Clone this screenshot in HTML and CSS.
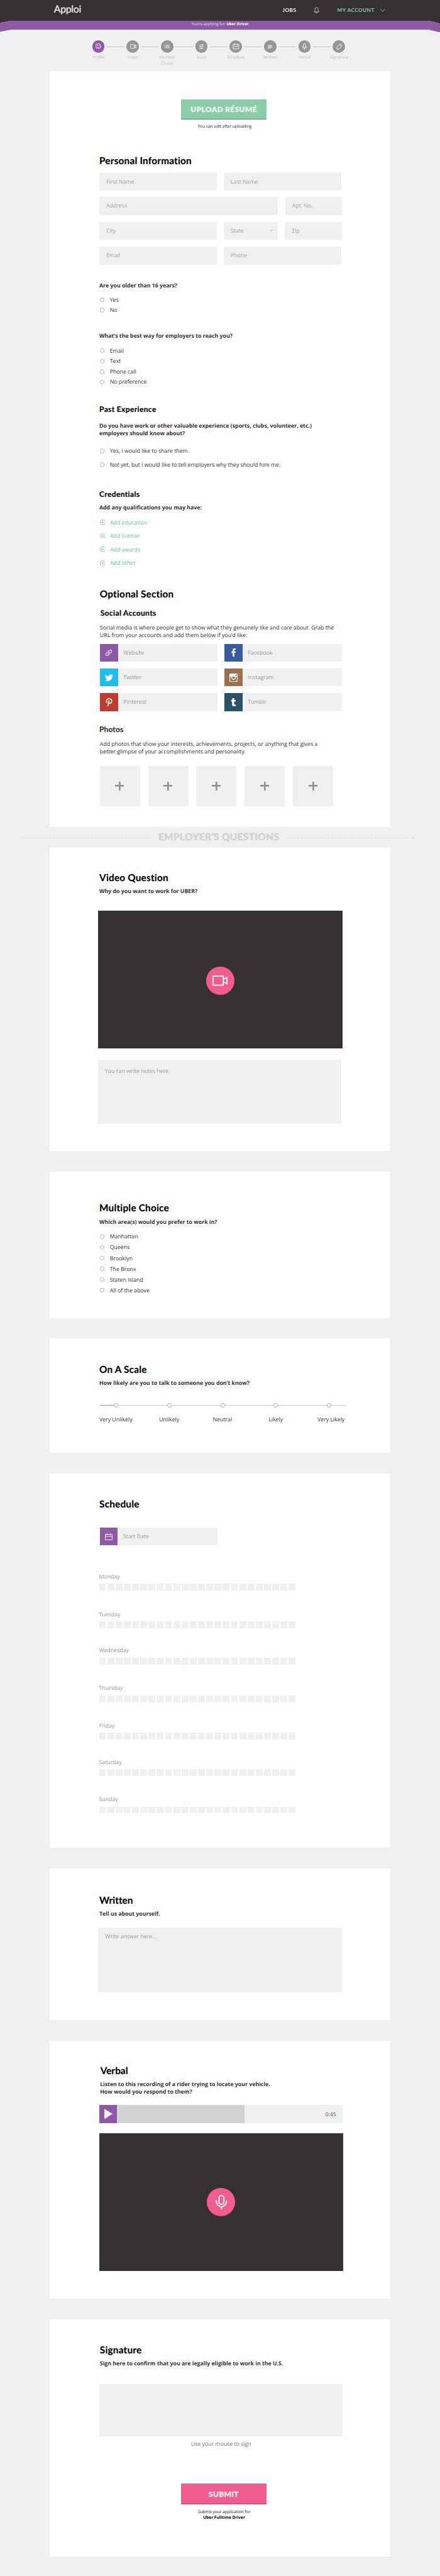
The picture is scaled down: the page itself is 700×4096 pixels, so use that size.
FILE: index.html
```html
<!DOCTYPE html>
<html lang="en">
<head>
<meta charset="utf-8">
<title>Apploi – Uber Driver application</title>
<link rel="stylesheet" href="styles.css">
</head>
<body>
<header class="topbar">
  <a class="logo">Apploi</a>
  <nav class="nav">
    <a class="nav-jobs">JOBS</a>
    <svg class="nav-bell" viewBox="0 0 17 19" fill="none" stroke="#eff1f1" stroke-width="1.4"><path d="M1 14.6h15M2.2 14.6c1.4-2 1.5-3.400 1.600-6C4 4 5.500 1.200 8.500 1.200S13 4 13.200 8.600c.1 2.600.2 4 1.600 6" stroke-linejoin="round"/><path d="M7 17.600h3" stroke-width="1.800"/></svg>
    <a class="nav-account">MY ACCOUNT</a>
    <svg class="nav-chevron" viewBox="0 0 14 9" fill="none" stroke="#86cba5" stroke-width="1.800"><path d="M.8.8 7 7.400 13.200.8"/></svg>
  </nav>
</header>
<div class="ribbon">
  <svg class="ribbon-shape" viewBox="0 0 1280 34" preserveAspectRatio="none"><path fill="#353132" d="M0 0h1280v8l-32-8H32L0 6z"/><path fill="#8f5aa5" d="M0 6 32 0h1216l32 8v26l-32-8H32L0 32z"/></svg>
  <p class="ribbon-text">You’re applying for: <b>Uber Driver</b></p>
</div>

<ol class="steps">
  <li class="step step-on"><span class="dot"><svg viewBox="0 0 20 20" fill="none" stroke="#fff" stroke-width="1.500"><circle cx="10" cy="10" r="7.300"/><path d="M6.300 11.500c.8 3 6.600 3 7.400 0"/><path d="M7.500 6.500v2.400M12.500 6.500v2.400" stroke-width="1.800"/></svg></span><span class="step-name">Profile</span></li>
  <li class="step"><span class="dot"><svg viewBox="0 0 20 20" fill="none" stroke="#fff" stroke-width="1.500"><path d="M3 5.500h11.500v11H3zM14.500 10l4.500-3v8.500l-4.500-3z" stroke-linejoin="round"/></svg></span><span class="step-name">Video</span></li>
  <li class="step"><span class="dot"><svg viewBox="0 0 20 20" fill="none" stroke="#fff" stroke-width="1.500"><path d="M6 7.500h12M6 11h12M6 14.500h12M2.500 7.500H4M2.500 11H4M2.500 14.500H4"/></svg></span><span class="step-name">Multiple<br>Choice</span></li>
  <li class="step"><span class="dot"><svg viewBox="0 0 20 20" fill="none" stroke="#fff" stroke-width="1.500"><path d="M3 6.500h14M3 11.500h14M3 16.500h14M12.500 4v5M7 9v5M10.500 14v5"/></svg></span><span class="step-name">Scale</span></li>
  <li class="step"><span class="dot"><svg viewBox="0 0 20 20" fill="none" stroke="#fff" stroke-width="1.500"><path d="M1.800 4.500h16.400v13.500H1.800zM1.800 10.500h16.400M6 2v4.500M14 2v4.500"/></svg></span><span class="step-name">Schedule</span></li>
  <li class="step"><span class="dot"><svg viewBox="0 0 20 20" fill="none" stroke="#fff" stroke-width="1.500"><path d="M4 7.800h12.500M4 10.500h12.500M4 13.200h12.500M4 16h8"/></svg></span><span class="step-name">Written</span></li>
  <li class="step"><span class="dot"><svg viewBox="0 0 20 20" fill="none" stroke="#fff" stroke-width="1.500"><rect x="6.500" y="2.500" width="7" height="11" rx="3.500"/><path d="M3.500 9.500c0 9 13 9 13 0M10 16.200v3.500"/></svg></span><span class="step-name">Verbal</span></li>
  <li class="step"><span class="dot"><svg viewBox="0 0 20 20" fill="none" stroke="#fff" stroke-width="1.500"><path d="M3.500 18.500v-6L13.200 2l6 5.300L9.500 18.500zM10.600 4.800l6 5.300" stroke-linejoin="round"/></svg></span><span class="step-name">Signature</span></li>
</ol>

<section class="card card-profile">
  <button class="btn btn-upload">UPLOAD RÉSUMÉ</button>
  <p class="upload-note">You can edit after uploading</p>

  <h2 class="title title-personal">Personal Information</h2>
  <div class="form">
    <div class="form-row row-half"><label class="field">First Name</label><label class="field">Last Name</label></div>
    <div class="form-row row-address"><label class="field">Address</label><label class="field">Apt. No.</label></div>
    <div class="form-row row-city"><label class="field">City</label><label class="field field-select">State <svg viewBox="0 0 9 6" fill="none" stroke="#939597" stroke-width="1.200"><path d="M.5.5l4 4.500 4-4.500"/></svg></label><label class="field">Zip</label></div>
    <div class="form-row row-half"><label class="field">Email</label><label class="field">Phone</label></div>
  </div>

  <h4 class="ask ask-age">Are you older than 16 years?</h4>
  <ul class="options options-age"><li>Yes</li><li>No</li></ul>
  <h4 class="ask ask-reach">What’s the best way for employers to reach you?</h4>
  <ul class="options options-reach"><li>Email</li><li>Text</li><li>Phone call</li><li>No preference</li></ul>

  <h3 class="subtitle subtitle-past">Past Experience</h3>
  <h4 class="ask ask-past">Do you have work or other valuable experience (sports, clubs, volunteer, etc.)<br>employers should know about?</h4>
  <ul class="options options-past"><li>Yes, I would like to share them.</li><li>Not yet, but I would like to tell employers why they should hire me.</li></ul>

  <h3 class="subtitle subtitle-cred">Credentials</h3>
  <h4 class="ask ask-cred">Add any qualifications you may have:</h4>
  <ul class="adds">
    <li><svg viewBox="0 0 16 16" fill="none" stroke="#5bb68a" stroke-width="1.200"><circle cx="8" cy="8" r="7.300"/><path d="M8 4.500v7M4.500 8h7"/></svg>Add education</li>
    <li><svg viewBox="0 0 16 16" fill="none" stroke="#5bb68a" stroke-width="1.200"><circle cx="8" cy="8" r="7.300"/><path d="M8 4.500v7M4.500 8h7"/></svg>Add license</li>
    <li><svg viewBox="0 0 16 16" fill="none" stroke="#5bb68a" stroke-width="1.200"><circle cx="8" cy="8" r="7.300"/><path d="M8 4.500v7M4.500 8h7"/></svg>Add awards</li>
    <li><svg viewBox="0 0 16 16" fill="none" stroke="#5bb68a" stroke-width="1.200"><circle cx="8" cy="8" r="7.300"/><path d="M8 4.500v7M4.500 8h7"/></svg>Add other</li>
  </ul>

  <h2 class="title title-optional">Optional Section</h2>
  <h3 class="subtitle subtitle-social">Social Accounts</h3>
  <p class="text text-social">Social media is where people get to show what they genuinely like and care about. Grab the<br>URL from your accounts and add them below if you’d like:</p>
  <div class="social">
    <div class="account"><span class="badge badge-web"><svg viewBox="0 0 24 24" fill="none" stroke="#fff" stroke-width="2.200" stroke-linecap="round"><path d="M10.200 13.800a4 4 0 0 0 5.700 0l4-4a4 4 0 0 0-5.700-5.700l-3 2.800"/><path d="M13.800 10.200a4 4 0 0 0-5.700 0l-4 4a4 4 0 0 0 5.700 5.700l3-2.800"/></svg></span><span class="account-name">Website</span></div>
    <div class="account"><span class="badge badge-fb"><svg viewBox="0 0 24 24" fill="#fff"><path d="M9.200 24V13H6V8.800h3.200V5.600C9.200 2 11.400 0 14.600 0H18v4.200h-2c-1.400 0-1.800.7-1.800 1.900v2.700H18L17.500 13h-3.300v11z"/></svg></span><span class="account-name">Facebook</span></div>
    <div class="account"><span class="badge badge-tw"><svg viewBox="0 0 24 24" fill="#fff"><path d="M23.950 4.570a10 10 0 0 1-2.820.77 4.960 4.960 0 0 0 2.160-2.720c-.95.55-2 .95-3.130 1.180a4.920 4.920 0 0 0-8.380 4.480C7.690 8.090 4.070 6.130 1.640 3.160a4.920 4.920 0 0 0 1.520 6.570 4.900 4.900 0 0 1-2.230-.61v.06c0 2.390 1.700 4.380 3.950 4.830a5 5 0 0 1-2.210.08 4.940 4.940 0 0 0 4.600 3.420A9.870 9.870 0 0 1 0 19.540a14 14 0 0 0 7.550 2.210c9.050 0 14-7.500 14-13.980 0-.21 0-.42-.02-.63a9.940 9.940 0 0 0 2.420-2.570z"/></svg></span><span class="account-name">Twitter</span></div>
    <div class="account"><span class="badge badge-ig"><svg viewBox="0 0 24 24"><path fill="#fff" fill-rule="evenodd" d="M2 0h20a2 2 0 0 1 2 2v20a2 2 0 0 1-2 2H2a2 2 0 0 1-2-2V2a2 2 0 0 1 2-2zm16 2.500v4h4v-4zM2.300 9.800V21a.8.8 0 0 0 .8.8h17.800a.8.8 0 0 0 .8-.8V9.800h-3.900a6.200 6.200 0 1 1-11.600 0zM12 8.200a3.900 3.900 0 1 0 0 7.800 3.900 3.900 0 0 0 0-7.800z"/></svg></span><span class="account-name">Instagram</span></div>
    <div class="account"><span class="badge badge-pin"><svg viewBox="0 0 24 24" fill="none" stroke="#fff" stroke-linecap="round"><path stroke-width="3" d="M6.200 13.200C2.500 9.500 4.500 2 12 1.800c6-.1 8.700 4 7.600 8.300-1.100 5-7.200 7-9 3.200"/><path stroke-width="3" d="M12 7.500 8.400 22.500"/></svg></span><span class="account-name">Pinterest</span></div>
    <div class="account"><span class="badge badge-tum"><svg viewBox="0 0 24 24" fill="#fff"><path d="M9 0h4.800v5.600H18v4.500h-4.200v6.500c0 2.400 1.800 3 5 2.200v4c-1.500.9-3.200 1.200-5 1.200-4 0-6.200-2-6.200-5.800v-8.100H5V6.200C7.500 5.300 8.700 3 9 0z"/></svg></span><span class="account-name">Tumblr</span></div>
  </div>

  <h3 class="subtitle subtitle-photos">Photos</h3>
  <p class="text text-photos">Add photos that show your interests, achievements, projects, or anything that gives a<br>better glimpse of your accomplishments and personality.</p>
  <div class="photos">
    <div class="photo"></div><div class="photo"></div><div class="photo"></div><div class="photo"></div><div class="photo"></div>
  </div>
</section>

<div class="divider"><i class="dash dash-left"></i><h2 class="divider-title">EMPLOYER’S QUESTIONS</h2><i class="dash dash-right"></i></div>

<section class="card card-video">
  <h2 class="title">Video Question</h2>
  <h4 class="ask ask-sub">Why do you want to work for UBER?</h4>
  <div class="screen"><span class="record"><svg viewBox="0 0 44 30" fill="none" stroke="#eff1f1" stroke-width="3.600" stroke-linejoin="round"><path d="M1.800 1.800h29.600v26.400H1.800zM32.500 10.800l9.600-5.300v19l-9.600-5.300"/></svg></span></div>
  <div class="notes">You can write notes here.</div>
</section>

<section class="card card-choice">
  <h2 class="title">Multiple Choice</h2>
  <h4 class="ask ask-sub">Which area(s) would you prefer to work in?</h4>
  <ul class="options options-area"><li>Manhattan</li><li>Queens</li><li>Brooklyn</li><li>The Bronx</li><li>Staten Island</li><li>All of the above</li></ul>
</section>

<section class="card card-scale">
  <h2 class="title">On A Scale</h2>
  <h4 class="ask ask-sub">How likely are you to talk to someone you don’t know?</h4>
  <div class="track"><i></i><i></i><i></i><i></i><i></i></div>
  <div class="track-labels"><span>Very Unlikely</span><span>Unlikely</span><span>Neutral</span><span>Likely</span><span>Very Likely</span></div>
</section>

<section class="card card-schedule">
  <h2 class="title">Schedule</h2>
  <div class="account account-date"><span class="badge badge-web"><svg viewBox="0 0 22 20" fill="none" stroke="#fff" stroke-width="1.700"><path d="M1 3.200h20v15.600H1zM1 9.200h20M6 .3v5M16 .3v5"/></svg></span><span class="account-name">Start Date</span></div>
  <div class="days">
    <div class="day"><span>Monday</span><div class="hours"><i></i><i></i><i></i><i></i><i></i><i></i><i></i><i></i><i></i><i></i><i></i><i></i><i></i><i></i><i></i><i></i><i></i><i></i><i></i><i></i><i></i><i></i><i></i><i></i></div></div>
    <div class="day"><span>Tuesday</span><div class="hours"><i></i><i></i><i></i><i></i><i></i><i></i><i></i><i></i><i></i><i></i><i></i><i></i><i></i><i></i><i></i><i></i><i></i><i></i><i></i><i></i><i></i><i></i><i></i><i></i></div></div>
    <div class="day"><span>Wednesday</span><div class="hours"><i></i><i></i><i></i><i></i><i></i><i></i><i></i><i></i><i></i><i></i><i></i><i></i><i></i><i></i><i></i><i></i><i></i><i></i><i></i><i></i><i></i><i></i><i></i><i></i></div></div>
    <div class="day"><span>Thursday</span><div class="hours"><i></i><i></i><i></i><i></i><i></i><i></i><i></i><i></i><i></i><i></i><i></i><i></i><i></i><i></i><i></i><i></i><i></i><i></i><i></i><i></i><i></i><i></i><i></i><i></i></div></div>
    <div class="day"><span>Friday</span><div class="hours"><i></i><i></i><i></i><i></i><i></i><i></i><i></i><i></i><i></i><i></i><i></i><i></i><i></i><i></i><i></i><i></i><i></i><i></i><i></i><i></i><i></i><i></i><i></i><i></i></div></div>
    <div class="day"><span>Saturday</span><div class="hours"><i></i><i></i><i></i><i></i><i></i><i></i><i></i><i></i><i></i><i></i><i></i><i></i><i></i><i></i><i></i><i></i><i></i><i></i><i></i><i></i><i></i><i></i><i></i><i></i></div></div>
    <div class="day"><span>Sunday</span><div class="hours"><i></i><i></i><i></i><i></i><i></i><i></i><i></i><i></i><i></i><i></i><i></i><i></i><i></i><i></i><i></i><i></i><i></i><i></i><i></i><i></i><i></i><i></i><i></i><i></i></div></div>
  </div>
</section>

<section class="card card-written">
  <h2 class="title">Written</h2>
  <h4 class="ask ask-sub">Tell us about yourself.</h4>
  <div class="notes">Write answer here...</div>
</section>

<section class="card card-verbal">
  <h2 class="title">Verbal</h2>
  <h4 class="ask ask-sub">Listen to this recording of a rider trying to locate your vehicle.<br>How would you respond to them?</h4>
  <div class="player"><span class="play"><svg viewBox="0 0 24 30" fill="#eff1f1"><path d="M0 0l24 15L0 30z"/></svg></span><span class="played"></span><span class="time">0:45</span></div>
  <div class="screen"><span class="record"><svg viewBox="0 0 34 43" fill="none" stroke="#eff1f1" stroke-width="3.600"><rect x="9.800" y="1.800" width="14.400" height="26" rx="7.200"/><path d="M1.800 15c0 26 30.400 26 30.400 0M17 34.500V43"/></svg></span></div>
</section>

<section class="card card-signature">
  <h2 class="title">Signature</h2>
  <h4 class="ask ask-sub">Sign here to confirm that you are legally eligible to work in the U.S.</h4>
  <div class="sign-box"></div>
  <p class="sign-hint">Use your mouse to sign</p>
  <button class="btn btn-submit">SUBMIT</button>
  <p class="submit-note">Submit your application for<br><b>Uber Fulltime Driver</b></p>
</section>
</body>
</html>
```
FILE: styles.css
```css
/* 1rem is ten layout units on a 1280-unit wide page */
html { font-size: 5.46875px; }
*, *::before, *::after { box-sizing: border-box; }
body {
  margin: 0;
  width: 128rem;
  height: 4096px;
  overflow: hidden;
  background: #eff1f1;
  color: #353132;
  font-family: "Open Sans", "Noto Sans", sans-serif;
  font-size: 1.6rem;
  line-height: 2.2rem;
  text-rendering: geometricPrecision;
}
h2, h3, h4, p, ul, ol { margin: 0; padding: 0; }
ul, ol { list-style: none; }
svg { display: block; }

/* header */
.topbar {
  display: flex;
  justify-content: space-between;
  height: 6rem;
  padding: 0 16rem 0 15.7rem;
  background: #353132;
  font-family: Lato, sans-serif;
}
.logo { font-size: 2.9rem; line-height: 5.5rem; color: #eff1f1; letter-spacing: -0.06rem; -webkit-text-stroke: 0.04rem #eff1f1; }
.nav { display: flex; align-items: center; font-weight: 700; font-size: 1.5rem; }
.nav-jobs { color: #eff1f1; letter-spacing: 0.09rem; margin-right: 5.1rem; }
.nav-bell { width: 1.7rem; height: 1.9rem; margin-right: 5.1rem; }
.nav-account { color: #86cba5; letter-spacing: 0.09rem; width: 11rem; white-space: nowrap; margin-right: 1.5rem; }
.nav-chevron { width: 1.4rem; height: 0.9rem; }
.ribbon { height: 3.4rem; display: grid; }
.ribbon-shape { grid-area: 1 / 1; width: 128rem; height: 3.4rem; }
.ribbon-text {
  grid-area: 1 / 1;
  z-index: 1;
  text-align: center;
  font-size: 1.11rem;
  line-height: 1.9rem;
  color: #e9def0;
}
.ribbon-text b { color: #fff; }

/* progress steps */
.steps { display: flex; gap: 0; height: 11.2rem; padding: 2.3rem 0 0 23.6rem; }
.step { width: 10rem; flex: none; display: flex; flex-direction: column; align-items: center; position: relative; }
.step + .step::before {
  content: "";
  position: absolute;
  left: -2.5rem;
  top: 1.8rem;
  width: 5rem;
  height: 1px;
  background: #bfc1c2;
}
.dot { width: 3.6rem; height: 3.6rem; border-radius: 50%; background: #939597; display: flex; align-items: center; justify-content: center; }
.dot svg { width: 2rem; height: 2rem; }
.step-on .dot { background: #8f5aa5; }
.step-name { margin-top: 0.5rem; font-size: 1.18rem; line-height: 1.7rem; color: #bdbfc0; text-align: center; }

/* cards */
.card { display: flex; flex-direction: column; align-items: flex-start; width: 99.2rem; margin: 0 14.4rem 6rem; padding-left: 14.5rem; background: #fff; }
.card-profile { height: 219.9rem; padding-top: 8.2rem; margin-bottom: 0; }
.card-video { height: 88.2rem; padding-top: 7.11rem; }
.card-choice { height: 42.5rem; padding-top: 9.01rem; margin-bottom: 5.95rem; }
.card-scale { height: 33.25rem; padding-top: 7.46rem; }
.card-schedule { height: 108.9rem; padding-top: 7.41rem; margin-bottom: 6.05rem; }
.card-written { height: 44.05rem; padding-top: 7.61rem; }
.card-verbal { height: 74.9rem; padding-top: 7.11rem; }
.card-signature { height: 68.96rem; padding-top: 7.31rem; margin-bottom: 0; }

.title { font: 700 2.8rem/3.4rem Lato, sans-serif; letter-spacing: 0.04rem; color: #000; -webkit-text-stroke: 0.03rem #000; }
.card-written .title, .card-verbal .title { letter-spacing: 0.01rem; }
.subtitle { font: 700 2.2rem/2.8rem Lato, sans-serif; letter-spacing: 0.065rem; color: #000; -webkit-text-stroke: 0.03rem; }
.ask { font-size: 1.6rem; line-height: 2.2rem; font-weight: 700; white-space: nowrap; }
.ask-sub { margin-top: 1.07rem; }
.text { white-space: nowrap; }

/* buttons */
.btn {
  border: 0;
  padding: 0;
  width: 24.7rem;
  height: 6rem;
  font: 900 2.2rem/5.4rem Lato, sans-serif;
  letter-spacing: 0.06rem;
  color: #eff1f1;
  text-align: center;
  -webkit-text-stroke: 0.05rem #eff1f1;
  margin-left: 23.85rem;
}
.btn-upload { background: #8bcda7; border-bottom: 0.2rem solid #438f74; line-height: 6rem; }
.btn-submit { background: #f15d90; border-bottom: 0.2rem solid #c2336b; margin-top: 10.52rem; }
.upload-note { margin: 1.23rem 0 0 24.1rem; width: 24.7rem; text-align: center; font-size: 1.2rem; line-height: 1.6rem; color: #111; }

/* personal form */
.title-personal { margin-top: 7.58rem; }
.form { margin-top: 1.59rem; }
.form-row { display: grid; height: 5.2rem; margin-bottom: 2rem; gap: 2rem; }
.form-row:first-child { margin-bottom: 1.9rem; }
.form-row:last-child { margin-bottom: 0; }
.row-half { grid-template-columns: 34.2rem 34.2rem; }
.row-address { grid-template-columns: 52rem 16.5rem; gap: 2.1rem; }
.row-city { grid-template-columns: 34.2rem 15.8rem 16.5rem; }
.field { background: #eff1f1; padding-left: 2rem; line-height: 5.2rem; color: #a0a2a3; }
.field-select { display: flex; align-items: center; justify-content: space-between; padding-right: 1.6rem; }
.field-select svg { width: 0.9rem; height: 0.6rem; }

/* questions */
.ask-age { margin-top: 4.98rem; }
.ask-reach { margin-top: 4.9rem; }
.ask-past { margin-top: 2.25rem; }
.ask-cred { margin-top: 1.53rem; }
.options li { display: flex; align-items: center; height: 3rem; white-space: nowrap; }
.options li::before { content: ""; width: 1.35rem; height: 1.35rem; border: 1px solid #b0b2b3; border-radius: 50%; margin: 0 1.55rem 0 0.15rem; }
.options-age { margin-top: 1.6rem; }
.options-reach { margin-top: 1.7rem; }
.options-reach li { height: 3.03rem; }
.options-past { margin-top: 2.06rem; }
.options-past li { height: 4rem; }
.options-area { margin-top: 1.64rem; }
.options-area li { height: 3.12rem; }
.subtitle-past { margin-top: 5.03rem; }
.subtitle-cred { margin-top: 5.06rem; }
.adds { margin-top: 1.18rem; }
.adds li { display: flex; align-items: center; height: 3.94rem; color: #6dbf96; }
.adds svg { width: 1.6rem; height: 1.6rem; margin: 0 1.4rem 0 0.1rem; }

/* optional section */
.title-optional { margin: 5.44rem 0 0 0.15rem; }
.subtitle-social { margin: 2.38rem 0 0 0.3rem; }
.text-social { margin: 1.69rem 0 0 0.15rem; }
.social { display: grid; grid-template-columns: 34.2rem 34.2rem; gap: 2rem; margin: 1.39rem 0 0 0.2rem; }
.account { display: flex; align-items: center; height: 5.2rem; background: #eff1f1; color: #97999a; }
.badge { width: 5.2rem; height: 100%; display: flex; align-items: center; justify-content: center; }
.badge svg { width: 2.4rem; height: 2.4rem; }
.badge-web { background: #8f5aa5; }
.badge-web svg { width: 2.2rem; height: 2.2rem; }
.badge-fb { background: #3959a0; }
.badge-tw { background: #1dbff2; }
.badge-ig { background: #9d6f4f; }
.badge-pin { background: #c33b2f; }
.badge-tum { background: #2b5068; }
.account-name { margin-left: 1.6rem; }
.subtitle-photos { margin-top: 3.88rem; letter-spacing: 0.02rem; color: #353132; }
.text-photos { margin: 1.78rem 0 0 0.15rem; }
.photos { display: flex; gap: 2.37rem; margin: 3.05rem 0 0 0.1rem; }
.photo { width: 11.7rem; height: 11.7rem; background: linear-gradient(#939597, #939597) center / 2.6rem 0.5rem no-repeat, linear-gradient(#939597, #939597) center / 0.5rem 2.6rem no-repeat, #eff1f1; }

/* divider */
.divider { display: flex; align-items: center; height: 6rem; }
.divider-title { font: 900 2.8rem/2.8rem Lato, sans-serif; letter-spacing: 0.075rem; color: #d1d3d4; -webkit-text-stroke: 0.09rem #d1d3d4; width: 39.3rem; text-align: center; white-space: nowrap; }
.dash { width: 37.5rem; margin-top: 0.2rem; height: 1px; }
.dash-left { margin-left: 6.5rem; background: repeating-linear-gradient(90deg, #dcdede 0 0.5rem, transparent 0.5rem 0.8rem); }
.dash-right { background: repeating-linear-gradient(90deg, #d4d6d7 0 0.5rem, transparent 0.5rem 0.8rem); }

/* video, written and verbal answers */
.screen { display: flex; align-items: center; justify-content: center; width: 71.1rem; height: 40rem; background: #353132; }
.record { width: 8.2rem; height: 8.3rem; border-radius: 50%; background: #f15d90; box-shadow: inset 0 -0.2rem 0 #dd3f79; display: flex; align-items: center; justify-content: center; }
.notes { width: 70.8rem; background: #eff1f1; color: #97999a; padding: 2.2rem 2rem; }
.card-video .screen { margin: 4.5rem 0 0 -0.4rem; }
.card-video .record svg { width: 4.4rem; height: 3rem; }
.card-video .record { margin-top: 0.8rem; }
.card-video .notes { margin: 3.25rem 0 0 -0.4rem; height: 18.8rem; }
.card-written .notes { margin: 2.92rem 0 0 -0.3rem; height: 18.8rem; padding-top: 1.4rem; }
.card-verbal .title { margin-left: 0.3rem; }
.card-verbal .ask { margin-left: 0.2rem; }
.card-verbal .screen { margin: 3rem 0 0 -0.1rem; }
.card-verbal .record svg { width: 3.4rem; height: 4.3rem; }
.player { display: flex; align-items: center; width: 70.8rem; height: 5.2rem; margin-top: 2.72rem; background: #eff1f1; }
.play { display: flex; align-items: center; width: 5.2rem; height: 100%; padding-left: 1.5rem; background: #8f5aa5; }
.play svg { width: 2.4rem; height: 3rem; }
.played { width: 37.1rem; height: 100%; background: #d1d2d4; }
.time { margin-left: auto; margin-right: 1.9rem; color: #58595b; }

/* scale */
.track {
  display: flex;
  align-items: center;
  gap: 14.2rem;
  width: 71.5rem;
  height: 1.4rem;
  margin: 4.68rem 0 0 0.1rem;
  padding-left: 4.1rem;
  background: linear-gradient(90deg, #939597 4.1rem, #c9cbcc 4.1rem) center / 100% 1px no-repeat;
}
.track i { flex: none; width: 1.3rem; height: 1.3rem; border: 1px solid #a0a2a3; border-radius: 50%; background: #fff; }
.track-labels { display: grid; grid-template-columns: repeat(5, 15.5rem); margin: 2.32rem 0 0 -2.95rem; text-align: center; }
.track-labels span:last-child { padding-left: 1.2rem; }

/* schedule */
.account-date { width: 34.2rem; height: 5.15rem; margin: 4.99rem 0 0 0.1rem; }
.account-date .badge svg { height: 2rem; }
.days { margin: 7.93rem 0 0 -0.1rem; color: #97999a; }
.day { height: 5.2rem; margin-bottom: 5.8rem; }
.day:nth-child(2) { margin-bottom: 5.31rem; }
.day:nth-child(4), .day:nth-child(6) { margin-bottom: 5.6rem; }
.day:nth-child(5) { margin-bottom: 5.48rem; }
.day span { display: block; }
.hours { display: flex; gap: 0.4rem; margin-top: 1rem; }
.hours i { width: 2rem; height: 2rem; background: #eff1f1; }

/* signature */
.card-signature .title, .card-signature .ask { margin-left: 0.15rem; }
.sign-box { width: 70.8rem; height: 15.2rem; margin-top: 4.92rem; background: #eff1f1; }
.sign-hint { width: 70.8rem; margin-top: 1.08rem; text-align: center; color: #77797b; }
.submit-note { width: 24.7rem; margin: 1.18rem 0 0 23.95rem; text-align: center; font-size: 1.2rem; line-height: 1.7rem; color: #000; }
```
